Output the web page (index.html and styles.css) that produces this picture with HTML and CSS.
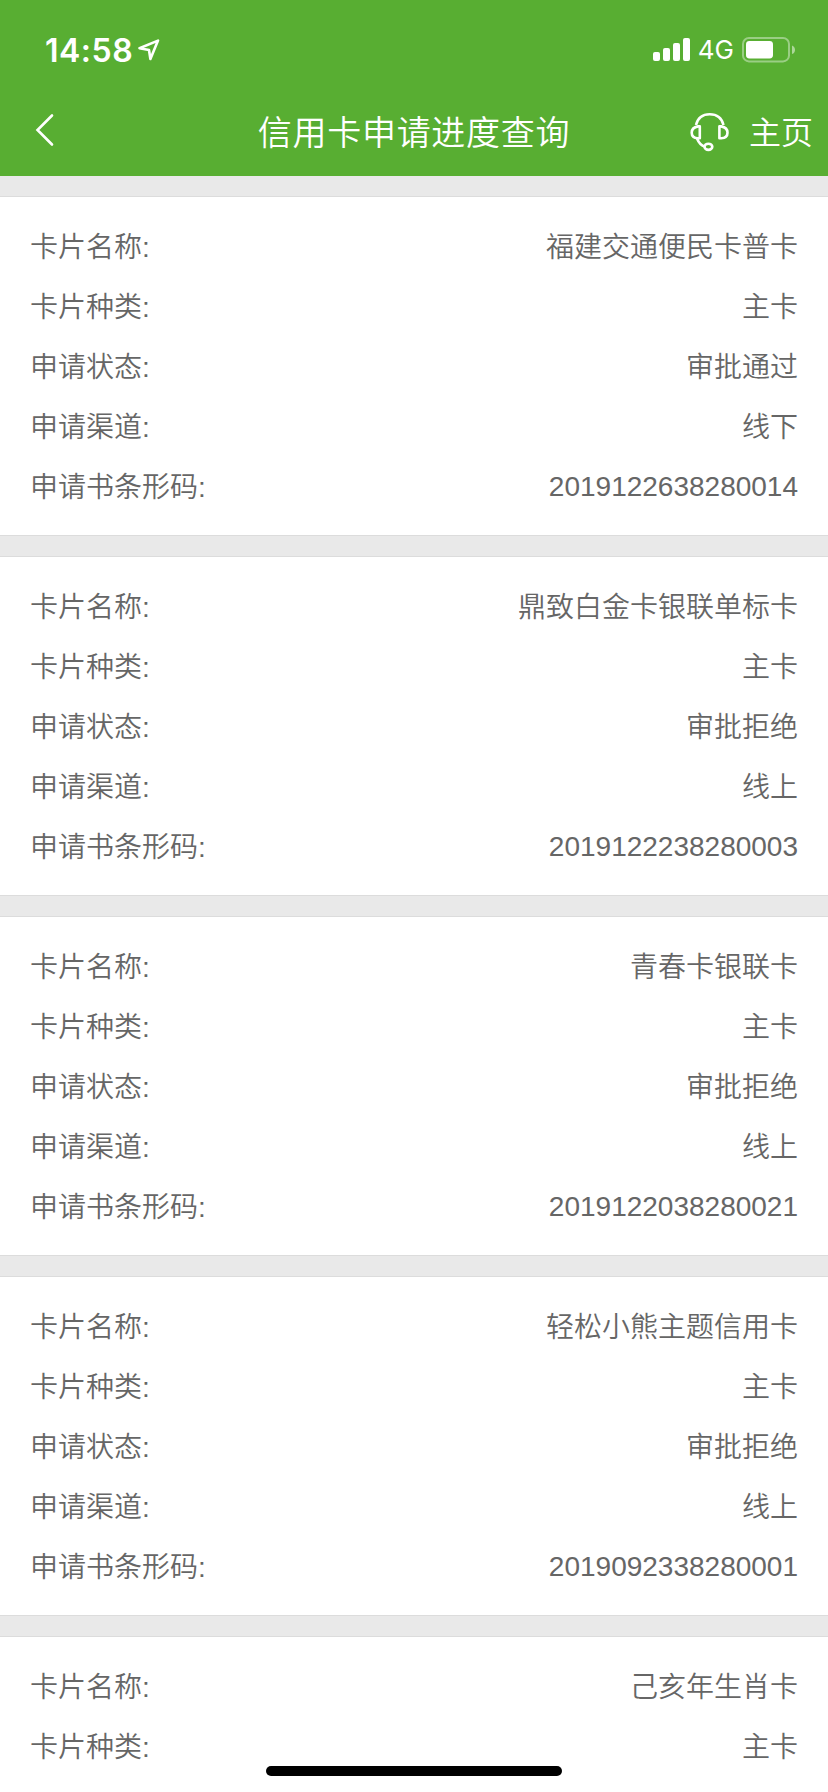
FILE: index.html
```
<!DOCTYPE html>
<html lang="zh-CN">
<head>
<meta charset="utf-8">
<title>信用卡申请进度查询</title>
<link rel="stylesheet" href="styles.css">
</head>
<body>
<header class="header">
  <div class="status">
    <div class="status-left">
      <span class="time">14:58</span>
      <svg class="location" width="22" height="22" viewBox="0 0 22 22"><path d="M1.5 9.2 20 1.6 12.4 20 11 11Z"/></svg>
    </div>
    <div class="status-right">
      <svg class="signal" width="38" height="24" viewBox="0 0 38 24"><rect x="0" y="14" width="7" height="9" rx="2"/><rect x="10" y="10" width="7" height="13" rx="2"/><rect x="20" y="5" width="7" height="18" rx="2"/><rect x="30" y="0" width="7" height="23" rx="2"/></svg>
      <span class="network">4G</span>
      <svg class="battery" width="54" height="26" viewBox="0 0 54 26"><rect class="battery-shell" x="1" y="1" width="46" height="23.4" rx="6"/><rect x="4" y="4" width="27" height="17.4" rx="3.4"/><path class="battery-cap" d="M50 8.4c4 1.3 4 7.300 0 8.600z"/></svg>
    </div>
  </div>
  <nav class="nav">
    <svg class="back" width="20" height="34" viewBox="0 0 20 34"><path d="M17 2.500 2.500 17 17 31.500"/></svg>
    <h1 class="title">信用卡申请进度查询</h1>
    <div class="actions">
      <svg class="headset" width="40" height="40" viewBox="0 0 40 40"><path d="M6 13C8 5 13.500 2.200 19.700 2.200S31.500 5 33.500 13"/><path d="M9.800 14.400H8C-.4 16 -.4 25.500 8 26.300h1.800z"/><path d="M29.400 14.400h1.800C39.600 16 39.600 25.500 31.200 26.300h-1.800z"/><path d="M7 26.500c2 5 4.500 7.200 8 8.200"/><ellipse cx="18.400" cy="34.800" rx="3.900" ry="3.100"/></svg>
      <span class="home">主页</span>
    </div>
  </nav>
</header>
<main class="list">
  <dl class="card">
    <div class="row"><dt>卡片名称:</dt><dd>福建交通便民卡普卡</dd></div>
    <div class="row"><dt>卡片种类:</dt><dd>主卡</dd></div>
    <div class="row"><dt>申请状态:</dt><dd>审批通过</dd></div>
    <div class="row"><dt>申请渠道:</dt><dd>线下</dd></div>
    <div class="row"><dt>申请书条形码:</dt><dd class="code">2019122638280014</dd></div>
  </dl>
  <dl class="card">
    <div class="row"><dt>卡片名称:</dt><dd>鼎致白金卡银联单标卡</dd></div>
    <div class="row"><dt>卡片种类:</dt><dd>主卡</dd></div>
    <div class="row"><dt>申请状态:</dt><dd>审批拒绝</dd></div>
    <div class="row"><dt>申请渠道:</dt><dd>线上</dd></div>
    <div class="row"><dt>申请书条形码:</dt><dd class="code">2019122238280003</dd></div>
  </dl>
  <dl class="card">
    <div class="row"><dt>卡片名称:</dt><dd>青春卡银联卡</dd></div>
    <div class="row"><dt>卡片种类:</dt><dd>主卡</dd></div>
    <div class="row"><dt>申请状态:</dt><dd>审批拒绝</dd></div>
    <div class="row"><dt>申请渠道:</dt><dd>线上</dd></div>
    <div class="row"><dt>申请书条形码:</dt><dd class="code">2019122038280021</dd></div>
  </dl>
  <dl class="card">
    <div class="row"><dt>卡片名称:</dt><dd>轻松小熊主题信用卡</dd></div>
    <div class="row"><dt>卡片种类:</dt><dd>主卡</dd></div>
    <div class="row"><dt>申请状态:</dt><dd>审批拒绝</dd></div>
    <div class="row"><dt>申请渠道:</dt><dd>线上</dd></div>
    <div class="row"><dt>申请书条形码:</dt><dd class="code">2019092338280001</dd></div>
  </dl>
  <dl class="card card-last">
    <div class="row"><dt>卡片名称:</dt><dd>己亥年生肖卡</dd></div>
    <div class="row"><dt>卡片种类:</dt><dd>主卡</dd></div>
  </dl>
</main>
<div class="home-indicator"></div>
</body>
</html>
```
FILE: styles.css
```
* { box-sizing: border-box; }
body {
  margin: 0;
  height: 1792px;
  overflow: hidden;
  display: flex;
  flex-direction: column;
  background: #e9e9e9;
  color: #666;
  font-family: "Liberation Sans", "Noto Sans CJK SC", sans-serif;
  font-size: 28px;
}
svg { display: block; flex: none; }
.header {
  flex: none;
  height: 176px;
  background: #58ae32;
  color: #fff;
}
.status {
  height: 88px;
  padding: 12px 32px 0 45px;
  display: flex;
  align-items: center;
  justify-content: space-between;
  font-family: Inter, sans-serif;
}
.status-left, .status-right { display: flex; align-items: center; }
.time { font-size: 32px; font-weight: 600; letter-spacing: .5px; line-height: 40px; padding-top: 1px; }
.location { margin-left: 5px; fill: none; stroke: #fff; stroke-width: 2.6; stroke-linejoin: round; }
.signal { fill: #fff; }
.network { font-size: 26px; line-height: 32px; margin: 0 8px 0 7px; }
.battery { fill: #fff; }
.battery .battery-shell { fill: none; stroke: #fff; stroke-opacity: .4; stroke-width: 2; }
.battery .battery-cap { fill-opacity: .5; }
.nav {
  height: 88px;
  padding: 0 15px;
  display: grid;
  grid-template-columns: 1fr auto 1fr;
  align-items: center;
}
.back { margin: 0 0 4px 20px; fill: none; stroke: #fff; stroke-width: 2.6; stroke-linecap: round; }
.title { margin: 0; font-size: 34px; font-weight: 350; letter-spacing: .7px; line-height: 50px; padding-top: 1px; }
.actions { display: flex; align-items: center; justify-content: flex-end; gap: 19px; }
.headset { fill: none; stroke: #fff; stroke-width: 2.6; stroke-linejoin: round; }
.home { font-size: 32px; font-weight: 350; line-height: 50px; padding-top: 1px; }
.list { padding-top: 20px; display: flex; flex-direction: column; gap: 20px; }
.card {
  flex: none;
  margin: 0;
  height: 340px;
  padding: 20px 30px 18px;
  background: #fff;
  border: solid #dcdcdc;
  border-width: 1px 0;
}
.card-last { height: 160px; border-bottom: 0; }
.row {
  height: 60px;
  display: flex;
  align-items: center;
  justify-content: space-between;
  line-height: 40px;
}
.row dt, .row dd { margin: 0; padding-top: 2px; font-weight: 350; }
.row .code { padding-top: 0; }
.home-indicator {
  position: absolute;
  left: 266px;
  top: 1766px;
  width: 296px;
  height: 10px;
  border-radius: 5px;
  background: #000;
}
```
